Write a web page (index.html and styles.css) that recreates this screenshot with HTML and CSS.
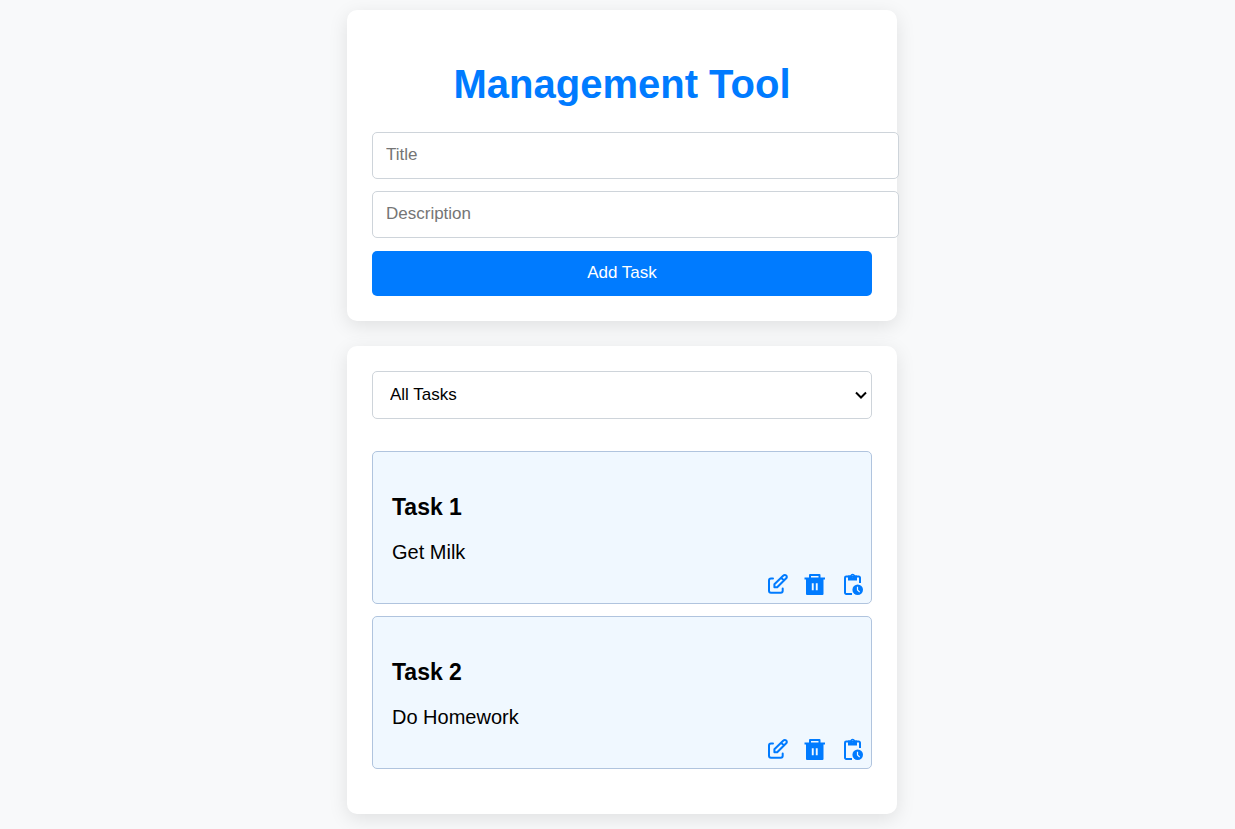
FILE: index.html
```html
<!DOCTYPE html>
<html lang="en">
<head>
<meta charset="utf-8">
<meta name="viewport" content="width=device-width, initial-scale=1">
<title>Management Tool</title>
<link rel="stylesheet" href="styles.css">
</head>
<body>
<svg class="sprite" aria-hidden="true">
  <symbol id="icon-edit" viewBox="0 0 22 22">
    <path d="M7 5.500H5a2 2 0 0 0-2 2V17.700a2 2 0 0 0 2 2H14.700a2 2 0 0 0 2-2V15.500" fill="none" stroke="currentColor" stroke-width="2" stroke-linecap="round"/>
    <path d="M8.400 14.300v-3L17.400 2.500a1.900 1.900 0 0 1 2.800 0 1.900 1.900 0 0 1 0 2.800L11.200 14.300zM15.200 4.800l2.700 2.700" fill="none" stroke="currentColor" stroke-width="2" stroke-linejoin="round"/>
  </symbol>
  <symbol id="icon-trash" viewBox="0 0 22 22">
    <path fill="currentColor" fill-rule="evenodd" d="M5 4.500V2a1 1 0 0 1 1-1h9.500a1 1 0 0 1 1 1v2.500H21v2h-1.500V21a1 1 0 0 1-1 1H3a1 1 0 0 1-1-1V6.500H.5v-2zM7 3v1.500h7.500V3zM7.800 10.300v7h1.900v-7zM11.800 10.300v7h1.900v-7z"/>
  </symbol>
  <symbol id="icon-pending" viewBox="0 0 22 22">
    <path d="M10 21H4.200A1.200 1.200 0 0 1 3 19.800V4.700a1.200 1.200 0 0 1 1.200-1.200H16.800A1.200 1.200 0 0 1 18 4.700V10" fill="none" stroke="currentColor" stroke-width="2"/>
    <path fill="currentColor" fill-rule="evenodd" d="M6 2.500h2.200a2.600 2.600 0 0 1 4.900 0H15v5H6zM10.600 2.200a1 1 0 1 0 0 2 1 1 0 0 0 0-2z"/>
    <circle cx="15.700" cy="16.700" r="5.300" fill="currentColor"/>
    <path d="M15.500 13.700v3.300l2.200 2.200" fill="none" stroke="#f0f8ff" stroke-width="1.200"/>
  </symbol>
</svg>
<main class="page">
  <section class="card">
    <h1 class="title">Management Tool</h1>
    <form class="task-form">
      <input class="field" type="text" placeholder="Title" aria-label="Title">
      <input class="field" type="text" placeholder="Description" aria-label="Description">
      <button class="submit" type="button">Add Task</button>
    </form>
  </section>
  <section class="card">
    <div class="filter">
      <select class="filter-select" aria-label="Filter tasks">
        <option>All Tasks</option>
        <option>Completed</option>
        <option>Pending</option>
      </select>
      <svg class="chevron" viewBox="0 0 12 8" aria-hidden="true"><path d="M1 1.500l5 5 5-5" fill="none" stroke="#000" stroke-width="2"/></svg>
    </div>
    <ul class="tasks">
      <li class="task">
        <h3 class="task-title">Task 1</h3>
        <p class="task-text">Get Milk</p>
        <div class="actions">
          <button class="action" type="button" aria-label="Edit"><svg class="icon"><use href="#icon-edit"/></svg></button>
          <button class="action" type="button" aria-label="Delete"><svg class="icon"><use href="#icon-trash"/></svg></button>
          <button class="action" type="button" aria-label="Mark status"><svg class="icon"><use href="#icon-pending"/></svg></button>
        </div>
      </li>
      <li class="task">
        <h3 class="task-title">Task 2</h3>
        <p class="task-text">Do Homework</p>
        <div class="actions">
          <button class="action" type="button" aria-label="Edit"><svg class="icon"><use href="#icon-edit"/></svg></button>
          <button class="action" type="button" aria-label="Delete"><svg class="icon"><use href="#icon-trash"/></svg></button>
          <button class="action" type="button" aria-label="Mark status"><svg class="icon"><use href="#icon-pending"/></svg></button>
        </div>
      </li>
    </ul>
  </section>
</main>
</body>
</html>
```
FILE: styles.css
```css
* { box-sizing: border-box; }
body {
  margin: 0;
  background: #f8f9fa;
  color: #000;
  font-family: Arial, "Liberation Sans", sans-serif;
  font-size: 20px;
}
.sprite { display: none; }
.page {
  display: flex;
  flex-direction: column;
  align-items: center;
  gap: 25px;
  padding: 10px 0 15px 9px;
}
.card {
  width: 100%;
  max-width: 550px;
  padding: 25px;
  border-radius: 10px;
  background: #fff;
  box-shadow: 0 5px 19px rgba(0, 0, 0, 0.1);
}
.title {
  margin: 26px 0 25px;
  color: #007bff;
  font-size: 40px;
  line-height: 46px;
  text-align: center;
}
.task-form {
  display: flex;
  flex-direction: column;
  gap: 12px;
}
.field,
.filter-select {
  border: 1px solid #ced4da;
  border-radius: 5px;
  background: #fff;
  color: #000;
  font: 17px Arial, "Liberation Sans", sans-serif;
}
.field {
  width: calc(100% + 27px);
  height: 47px;
  padding: 0 13px 1px;
}
.field::placeholder { color: #757575; }
.submit {
  height: 45px;
  margin-top: 1px;
  padding: 0 12px 2px;
  border: 0;
  border-radius: 5px;
  background: #007bff;
  color: #fff;
  font: 17px Arial, "Liberation Sans", sans-serif;
}
.filter {
  display: grid;
  align-items: center;
  margin-bottom: 32px;
}
.filter-select,
.chevron { grid-area: 1 / 1; }
.filter-select {
  width: 100%;
  height: 48px;
  padding: 0 17px 1px;
  appearance: none;
}
.chevron {
  justify-self: end;
  width: 12px;
  height: 8px;
  margin-right: 5px;
  pointer-events: none;
}
.tasks {
  display: flex;
  flex-direction: column;
  gap: 12px;
  margin: 0 0 20px;
  padding: 0;
  list-style: none;
}
.task {
  padding: 42px 7px 8px 19px;
  border: 1px solid #b0c4de;
  border-radius: 5px;
  background: #f0f8ff;
}
.task-title {
  margin: 0 0 20px;
  font-size: 23px;
  line-height: 26px;
}
.task-text {
  margin: 0 0 9px;
  line-height: 24px;
}
.actions {
  display: flex;
  justify-content: flex-end;
  gap: 16px;
}
.action {
  display: flex;
  padding: 0;
  border: 0;
  background: none;
  color: #007bff;
}
.icon {
  width: 22px;
  height: 22px;
}
```
